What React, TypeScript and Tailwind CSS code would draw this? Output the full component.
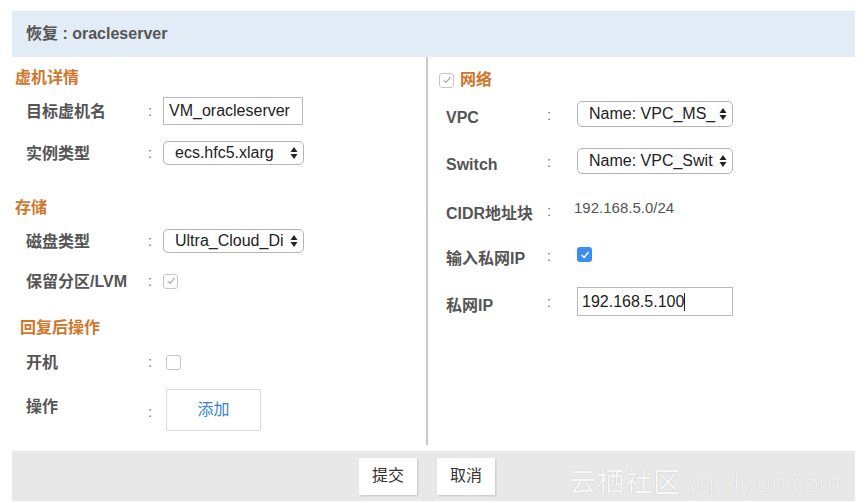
import React from 'react';

const FONT = { fontFamily: '"Liberation Sans", "Noto Sans CJK SC", sans-serif' };

const Arrows = () => (
  <svg width="8" height="14" viewBox="0 0 8 14" className="shrink-0">
    <path d="M4 1 L7.5 6 L0.5 6 Z" fill="#222" />
    <path d="M4 13 L7.5 8 L0.5 8 Z" fill="#222" />
  </svg>
);

const Select = ({ value, className }: { value: string; className: string }) => (
  <div
    className={`flex items-center bg-white border border-[#b5b5b5] rounded-[5px] pl-[11px] pr-[5px] ${className}`}
  >
    <span className="flex-1 whitespace-nowrap text-[16px] text-[#222] leading-none">{value}</span>
    <Arrows />
  </div>
);

const Check = ({ on, muted }: { on?: boolean; muted?: boolean }) => {
  if (on) {
    return (
      <div className="w-[15px] h-[15px] rounded-[3px] bg-[#3a8ef2] flex items-center justify-center">
        <svg width="10" height="10" viewBox="0 0 10 10">
          <path d="M2 5.3 L4.1 7.4 L8.2 2.4" stroke="#fff" strokeWidth="1.5" fill="none" strokeLinecap="round" strokeLinejoin="round" />
        </svg>
      </div>
    );
  }
  return (
    <div className="w-[15px] h-[15px] rounded-[3px] border border-[#c6c6c6] bg-white flex items-center justify-center">
      {muted && (
        <svg width="10" height="10" viewBox="0 0 10 10">
          <path d="M2 5.3 L4.1 7.4 L8.2 2.4" stroke="#a9a9a9" strokeWidth="1.2" fill="none" strokeLinecap="round" strokeLinejoin="round" />
        </svg>
      )}
    </div>
  );
};

const LeftRow = ({ label, className, children }: { label: string; className: string; children: React.ReactNode }) => (
  <div className={`flex items-center pl-[14px] ${className}`}>
    <div className="w-[122px] translate-y-[1px] font-bold text-[16px] text-[#555]">{label}</div>
    <div className="w-[15px] text-[15px] text-[#777]">:</div>
    {children}
  </div>
);

const RightRow = ({ label, className, children }: { label: string; className: string; children: React.ReactNode }) => (
  <div className={`flex items-center pl-[18px] ${className}`}>
    <div className="w-[101px] translate-y-[4px] font-bold text-[16px] text-[#555]">{label}</div>
    <div className="w-[30px] translate-y-[1px] text-[15px] text-[#777]">:</div>
    {children}
  </div>
);

const Title = ({ text, className }: { text: string; className: string }) => (
  <div className={`h-[20px] flex items-center font-bold text-[16px] text-[#cf772c] ${className}`}>{text}</div>
);

export default function App() {
  return (
    <div className="relative w-[865px] h-[503px] bg-white pl-[12px] pt-[11px] pr-[10px]" style={FONT}>
      <div className="h-[46px] bg-[#e2ecf6] flex items-center pl-[14px] font-bold text-[16px] text-[#555]">
        恢复 : oracleserver
      </div>

      <div className="flex">
        <div className="w-[416px] h-[388px] border-r-2 border-[#c9c9c9] flex flex-col">
          <Title text="虚机详情" className="mt-[11px] pl-[3px]" />
          <LeftRow label="目标虚机名" className="mt-[9px] h-[28px]">
            <div className="w-[140px] h-[28px] border border-[#b8b8b8] flex items-center pl-[5px] text-[16px] text-[#222] whitespace-nowrap overflow-hidden">
              VM_oracleserver
            </div>
          </LeftRow>
          <LeftRow label="实例类型" className="mt-[16px] h-[24px]">
            <Select value="ecs.hfc5.xlarg" className="w-[141px] h-[24px]" />
          </LeftRow>

          <Title text="存储" className="mt-[33px] pl-[3px]" />
          <LeftRow label="磁盘类型" className="mt-[11px] h-[24px]">
            <Select value="Ultra_Cloud_Di" className="w-[141px] h-[24px]" />
          </LeftRow>
          <LeftRow label="保留分区/LVM" className="mt-[18px] h-[20px]">
            <Check muted />
          </LeftRow>

          <Title text="回复后操作" className="mt-[27px] pl-[8px]" />
          <LeftRow label="开机" className="mt-[14px] h-[20px]">
            <div className="ml-[3px]">
              <Check />
            </div>
          </LeftRow>
          <div className="flex pl-[14px] mt-[17px] h-[42px]">
            <div className="w-[122px] pt-[6px] font-bold text-[16px] text-[#555]">操作</div>
            <div className="w-[18px] pt-[12px] text-[15px] text-[#777]">:</div>
            <button className="w-[95px] h-[42px] border border-[#dcdcdc] bg-white text-[16px] text-[#3384d6]">
              添加
            </button>
          </div>
        </div>

        <div className="flex-1 flex flex-col">
          <div className="mt-[13px] h-[20px] flex items-center pl-[11px] gap-[6px]">
            <Check muted />
            <span className="font-bold text-[16px] text-[#cf772c]">网络</span>
          </div>
          <RightRow label="VPC" className="mt-[11px] h-[26px]">
            <Select value="Name: VPC_MS_" className="w-[156px] h-[26px]" />
          </RightRow>
          <RightRow label="Switch" className="mt-[21px] h-[26px]">
            <Select value="Name: VPC_Swit" className="w-[156px] h-[26px]" />
          </RightRow>
          <RightRow label="CIDR地址块" className="mt-[26px] h-[20px]">
            <span className="-ml-[3px] -mt-[4px] text-[15px] text-[#555]">192.168.5.0/24</span>
          </RightRow>
          <RightRow label="输入私网IP" className="mt-[25px] h-[20px]">
            <div className="-mt-[1px]">
              <Check on />
            </div>
          </RightRow>
          <RightRow label="私网IP" className="mt-[22px] h-[29px]">
            <div className="w-[156px] h-[29px] border border-[#b8b8b8] flex items-center pl-[4px] text-[16px] text-[#222]">
              192.168.5.100
              <span className="w-px h-[18px] bg-[#222]" />
            </div>
          </RightRow>
        </div>
      </div>

      <div className="mt-[6px] h-[50px] bg-[#e8e8e8] flex items-center justify-center gap-[20px] pr-[13px]">
        <button className="w-[58px] h-[37px] bg-white shadow-[1px_1px_2px_rgba(0,0,0,0.15)] text-[16px] text-[#333]">提交</button>
        <button className="w-[58px] h-[37px] bg-white shadow-[1px_1px_2px_rgba(0,0,0,0.15)] text-[16px] text-[#333]">取消</button>
      </div>

      <div
        className="absolute left-[569px] top-[463px] flex items-baseline gap-[7px] text-white/90 whitespace-nowrap"
        style={{ textShadow: '0 0 1px rgba(0,0,0,0.25)' }}
      >
        <span className="text-[27px] tracking-[1px]">云栖社区</span>
        <span className="text-[25px] font-light" style={{ fontFamily: '"Open Sans", sans-serif' }}>
          yq.aliyun.com
        </span>
      </div>
    </div>
  );
}
